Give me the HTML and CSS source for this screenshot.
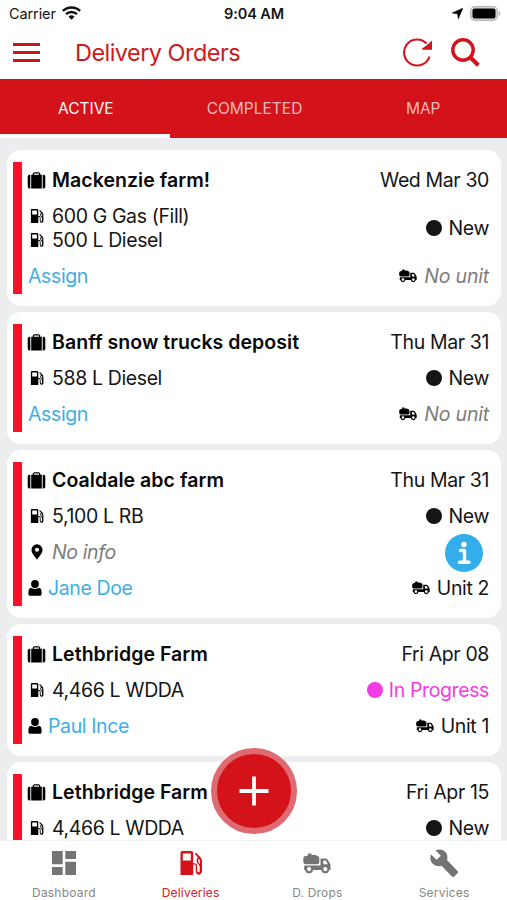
FILE: index.html
```html
<!DOCTYPE html>
<html lang="en">
<head>
<meta charset="utf-8">
<title>Delivery Orders</title>
<link rel="stylesheet" href="styles.css">
</head>
<body>
<svg class="defs" aria-hidden="true">
  <symbol id="case" viewBox="0 0 18 17"><path d="M2.800 2.800v13.700H2A1.800 1.800 0 0 1 .2 14.700V4.600A1.800 1.800 0 0 1 2 2.800zM15.200 2.800v13.700h.8a1.800 1.800 0 0 0 1.800-1.800V4.600A1.800 1.800 0 0 0 16 2.800zM3.700 2.800h1.500V1.500L6.500.3h5l1.300 1.200v1.300h1.500v13.700H3.700zM6.500 2.800h5V1.600h-5z" fill-rule="evenodd"/></symbol>
  <symbol id="pump" viewBox="0 0 22 24"><path fill-rule="evenodd" d="M2.500 0h8.700a2 2 0 0 1 2 2v10.200h1a3 3 0 0 1 3 3v4.600c0 2 2.500 2 2.500 0V16c0-2.700-3.100-3-3.100-6.200V8.200l1.300-1.800L14.800 3l1.100-1.200 4.400 4.300c1.200 1.300 1.700 3 1.700 5v9c0 4.800-6.200 4.800-6.200.2v-5.200c0-1-.6-1.500-1.600-1.500h-1V24H.5V2c0-1.200.8-2 2-2zM2.800 2.500v7h8v-7zM18.200 8.300v1.800c0 1.300.7 2.200 1.800 3 .1-2-.1-3.800-.7-5.200z"/></symbol>
  <symbol id="truck" viewBox="0 0 28 21"><path fill-rule="evenodd" d="M5 .5h3.500v1.600h3.800L14.500 3a2.300 2.300 0 0 1 1.800 2.300v3.900a2.300 2.300 0 0 1-2 2H2.600A2.500 2.500 0 0 1 .3 8.900V5.400A2.500 2.500 0 0 1 2.500 3L5 2.400zM17.500 5.500h4.700a3 3 0 0 1 2.500 1.300l2.300 3.700a3 3 0 0 1 .5 1.800v4.600h-1.300a4 4 0 0 1-7.900 0H10a4 4 0 0 1-7.900 0H1.200v-4.500h16.300zM20.300 7.500v3.800h4.600L22.700 7.500zM6.100 14a2.100 2.100 0 1 0 0 4.200 2.100 2.100 0 0 0 0-4.200zm16.200 0a2.100 2.100 0 1 0 0 4.200 2.100 2.100 0 0 0 0-4.200z"/></symbol>
  <symbol id="pin" viewBox="0 0 12 16"><path fill-rule="evenodd" d="M6 .3A5.500 5.500 0 0 0 .5 5.800C.5 9.700 3.700 12 6 15.800 8.300 12 11.500 9.700 11.500 5.800A5.500 5.500 0 0 0 6 .3zm0 3.500a2 2 0 1 1 0 4 2 2 0 0 1 0-4z"/></symbol>
  <symbol id="person" viewBox="0 0 14 16"><circle cx="7" cy="4" r="3.900"/><path d="M3.300 7.800C4.400 9.300 9.600 9.300 10.700 7.800c2.100.4 2.900 1.700 2.900 4.400v1.600c0 1.400-.8 2-2 2H2.400c-1.200 0-2-.6-2-2v-1.600c0-2.700.8-4 2.900-4.400z"/></symbol>
  <symbol id="wrench" viewBox="0 0 28 28"><path d="M5.500 1.500C9.500-.5 14 .5 16.200 4c1.400 2.300 1.500 4.500.8 7L27.500 22c.8.800.8 1.500 0 2.300l-3.200 3.200c-.8.800-1.500.8-2.300 0L11.500 16.700C8.500 17.700 5 17 2.800 14.700.3 12.200-.2 8.500 1 5.500l5.600 5.300 4.200-4z"/></symbol>
</svg>

<div class="app">
  <header>
    <div class="status">
      <div class="carrier"><span>Carrier</span>
        <svg width="19" height="14" viewBox="0 0 19 14"><path d="M.8 4.900a12.500 12.500 0 0 1 17.400 0M4 8.100a8 8 0 0 1 11 0" fill="none" stroke="#111" stroke-width="2.500"/><path d="M6.500 10.800a4.300 4.300 0 0 1 6 0l-3 3z" fill="#111"/></svg>
      </div>
      <div class="clock">9:04 AM</div>
      <div class="power">
        <svg width="11" height="11" viewBox="0 0 11 11"><path d="M10.800.2 6.300 10.800 5.600 5.800.2 5z" stroke="#000" stroke-width=".6"/></svg>
        <svg width="31" height="15" viewBox="0 0 31 15"><rect x=".7" y=".7" width="26.600" height="13.600" rx="4" fill="#ddd" stroke="#b5b5b5" stroke-width="1.200"/><rect x="2.500" y="2.500" width="23" height="10" rx="2" fill="#000"/><path d="M28.700 5c2 .8 2 4.200 0 5z" fill="#aaa"/></svg>
      </div>
    </div>
    <div class="toolbar">
      <svg class="menu" width="27" height="19" viewBox="0 0 27 19"><path d="M0 1.500h27M0 9.500h27M0 17.500h27" stroke="#c9151e" stroke-width="3"/></svg>
      <h1>Delivery Orders</h1>
      <svg width="30" height="30" viewBox="0 0 30 30"><path d="M26.500 18.500A13 13 0 1 1 23.500 5.500" fill="none" stroke="#d3131b" stroke-width="2.100"/><path d="M29 2.500v9.300h-9.700v-1.600l3.500-2.200 3.500-3z" fill="#d3131b"/></svg>
      <svg class="search" width="29" height="29" viewBox="0 0 29 29"><circle cx="12" cy="12" r="10.200" fill="none" stroke="#d3131b" stroke-width="3.400"/><path d="m19 19 8.300 8.300" stroke="#d3131b" stroke-width="4.200"/></svg>
    </div>
  </header>

  <nav class="tabs">
    <div class="tab active"><span>ACTIVE</span></div>
    <div class="tab"><span>COMPLETED</span></div>
    <div class="tab"><span>MAP</span></div>
  </nav>

  <main>
    <article class="card">
      <div class="stripe"></div>
      <div class="rows">
        <div class="row"><div class="cell title"><svg class="case"><use href="#case"/></svg><b>Mackenzie farm!</b></div><span>Wed Mar 30</span></div>
        <div class="row">
          <div><div class="cell"><svg class="pump"><use href="#pump"/></svg><span>600 G Gas (Fill)</span></div><div class="cell"><svg class="pump"><use href="#pump"/></svg><span>500 L Diesel</span></div></div>
          <div class="state"><i class="dot"></i><span>New</span></div>
        </div>
        <div class="row"><a>Assign</a><div class="unit"><svg class="truck"><use href="#truck"/></svg><em>No unit</em></div></div>
      </div>
    </article>

    <article class="card">
      <div class="stripe"></div>
      <div class="rows">
        <div class="row"><div class="cell title"><svg class="case"><use href="#case"/></svg><b>Banff snow trucks deposit</b></div><span>Thu Mar 31</span></div>
        <div class="row"><div class="cell"><svg class="pump"><use href="#pump"/></svg><span>588 L Diesel</span></div><div class="state"><i class="dot"></i><span>New</span></div></div>
        <div class="row"><a>Assign</a><div class="unit"><svg class="truck"><use href="#truck"/></svg><em>No unit</em></div></div>
      </div>
    </article>

    <article class="card">
      <div class="stripe"></div>
      <div class="rows">
        <div class="row"><div class="cell title"><svg class="case"><use href="#case"/></svg><b>Coaldale abc farm</b></div><span>Thu Mar 31</span></div>
        <div class="row"><div class="cell"><svg class="pump"><use href="#pump"/></svg><span>5,100 L RB</span></div><div class="state"><i class="dot"></i><span>New</span></div></div>
        <div class="row"><div class="cell"><svg class="pin"><use href="#pin"/></svg><em>No info</em></div>
          <svg class="info" viewBox="0 0 38 38"><circle cx="19" cy="19" r="19" fill="#33aeea"/><circle cx="19" cy="10.500" r="2.700" fill="#fff"/><path d="M15.500 16.500h4V28M14.500 28.200h9.500" fill="none" stroke="#fff" stroke-width="3.400" stroke-linecap="round" stroke-linejoin="round"/></svg>
        </div>
        <div class="row"><div class="cell driver"><svg class="person"><use href="#person"/></svg><a>Jane Doe</a></div><div class="unit"><svg class="truck"><use href="#truck"/></svg><span>Unit 2</span></div></div>
      </div>
    </article>

    <article class="card">
      <div class="stripe"></div>
      <div class="rows">
        <div class="row"><div class="cell title"><svg class="case"><use href="#case"/></svg><b>Lethbridge Farm</b></div><span>Fri Apr 08</span></div>
        <div class="row"><div class="cell"><svg class="pump"><use href="#pump"/></svg><span>4,466 L WDDA</span></div><div class="state progress"><i class="dot"></i><span>In Progress</span></div></div>
        <div class="row"><div class="cell driver"><svg class="person"><use href="#person"/></svg><a>Paul Ince</a></div><div class="unit"><svg class="truck"><use href="#truck"/></svg><span>Unit 1</span></div></div>
      </div>
    </article>

    <article class="card">
      <div class="stripe"></div>
      <div class="rows">
        <div class="row"><div class="cell title"><svg class="case"><use href="#case"/></svg><b>Lethbridge Farm</b></div><span>Fri Apr 15</span></div>
        <div class="row"><div class="cell"><svg class="pump"><use href="#pump"/></svg><span>4,466 L WDDA</span></div><div class="state"><i class="dot"></i><span>New</span></div></div>
      </div>
    </article>
  </main>

  <footer>
    <div class="item"><svg width="24" height="24" viewBox="0 0 24 24"><path d="M0 0h10.700v13.300H0zM13.300 0H24v8H13.300zM0 16h10.700v8H0zM13.300 10.700H24V24H13.300z"/></svg><span>Dashboard</span></div>
    <div class="item current"><svg width="22" height="24"><use href="#pump"/></svg><span>Deliveries</span></div>
    <div class="item"><svg width="28" height="21"><use href="#truck"/></svg><span>D. Drops</span></div>
    <div class="item"><svg width="28" height="28"><use href="#wrench"/></svg><span>Services</span></div>
  </footer>

  <button class="add" aria-label="Add order"><svg width="30" height="30" viewBox="0 0 30 30"><path d="M15 .5v29M.5 15h29" stroke="#fff" stroke-width="3.800"/></svg></button>
</div>
</body>
</html>
```

FILE: styles.css
```css
* { box-sizing: border-box; }
body { margin: 0; background: #ebedef; color: #151515; font-family: Inter, "Liberation Sans", sans-serif; }
svg { display: block; flex: none; }
.defs { display: none; }
.app { position: relative; width: 507px; height: 900px; display: flex; flex-direction: column; overflow: hidden; }
header { height: 79px; flex: none; background: #fff; }
.status { height: 27px; display: grid; grid-template-columns: 1fr auto 1fr; align-items: center; padding: 0 6px 0 9px; font-size: 14.5px; letter-spacing: -.1px; }
.carrier { display: flex; align-items: center; gap: 6px; }
.carrier svg { margin-top: -2px; }
.clock { font-weight: 600; margin-left: -2px; }
.power { display: flex; justify-content: flex-end; align-items: center; gap: 7px; }
.toolbar { height: 51px; display: flex; align-items: center; padding: 0 27px 0 13px; }
h1 { flex: 1; margin: 0 0 0 35px; font-size: 23.5px; font-weight: 400; letter-spacing: -.55px; color: #cf1820; }
.search { margin-left: 18px; }
.tabs { display: flex; height: 59px; flex: none; background: #d31219; color: #f3babb; font-size: 15.5px; }
.tab { flex: 1; display: flex; align-items: center; justify-content: center; border-bottom: 4px solid transparent; padding: 4px 0 0 1px; }
.tab.active { color: #fff; border-color: #fff; padding-left: 2px; }
main { flex: 1; min-height: 0; overflow: hidden; display: flex; flex-direction: column; gap: 6px; padding: 12px 6px 0 7px; font-size: 19.5px; line-height: 24px; letter-spacing: -.38px; }
.card { flex: none; display: flex; gap: 6px; padding: 12px 12px 12px 6px; border-radius: 14px; background: #fff; }
.stripe { width: 9px; background: #fa1128; }
.rows { flex: 1; display: flex; flex-direction: column; gap: 12px; padding: 6px 0; }
.row { display: flex; align-items: center; justify-content: space-between; white-space: nowrap; }
.cell { display: flex; align-items: center; }
.title b { font-weight: 600; letter-spacing: .05px; color: #080808; }
.case { width: 19px; height: 17px; margin: 0 6px 0 -1px; }
.pump { width: 14px; height: 14px; margin: 0 8px 0 2px; }
.pin { width: 12px; height: 16px; margin: 0 9px 0 3px; }
.person { width: 14px; height: 16px; margin-right: 6px; }
.truck { width: 18px; height: 14px; }
.unit, .state { display: flex; align-items: center; gap: 7px; }
.unit em { letter-spacing: -.2px; }
.state { gap: 6px; }
.dot { width: 16px; height: 16px; border-radius: 50%; background: currentColor; }
.progress { color: #f23be2; }
a { color: #3eaee5; }
em { color: #7d7d7d; }
.info { width: 38px; height: 38px; margin: -6px 6px -8px 0; }
footer { height: 60px; flex: none; display: flex; background: #fff; border-top: 1px solid #f3f3f3; color: #888; }
.item { flex: 1; display: grid; grid-template-rows: 44px 14px; justify-items: center; align-items: center; font-size: 12px; letter-spacing: .2px; fill: #747474; padding-left: 1px; }
.item.current { color: #d52028; fill: #d31219; }
.add { position: absolute; left: 211px; top: 748px; width: 86px; height: 86px; padding: 0; display: flex; align-items: center; justify-content: center; border: 6px solid #df6a72; border-radius: 50%; background: #d31219; }
```
